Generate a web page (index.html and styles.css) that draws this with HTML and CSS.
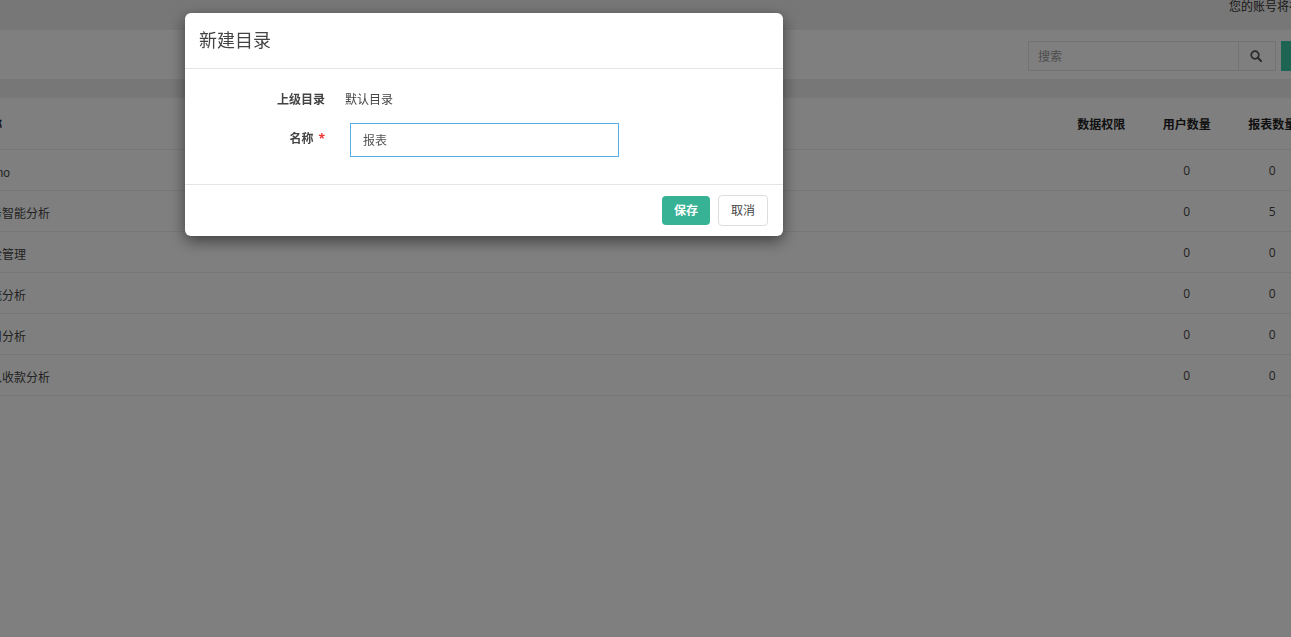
FILE: index.html
```html
<!DOCTYPE html>
<html lang="zh">
<head>
<meta charset="utf-8">
<title>新建目录</title>
<link rel="stylesheet" href="styles.css">
</head>
<body>
<div class="page">
  <div class="notice"><span class="notice-text">您的账号将在30天后到期</span></div>
  <div class="toolbar">
    <div class="search">
      <input class="search-input" type="text" placeholder="搜索">
      <button class="search-btn" type="button" aria-label="搜索">
        <svg width="12" height="12" viewBox="0 0 12 12"><circle cx="5" cy="5" r="3.8" fill="none" stroke="#555" stroke-width="1.7"/><path d="M7.8 7.8 11 11" stroke="#555" stroke-width="2" stroke-linecap="round"/></svg>
      </button>
    </div>
    <div class="add-btn"></div>
  </div>
  <div class="panel">
    <div class="row head"><div class="name">名称</div><div class="num">数据权限</div><div class="num">用户数量</div><div class="num">报表数量</div></div>
    <div class="row"><div class="name">Demo</div><div class="num"></div><div class="num">0</div><div class="num">0</div></div>
    <div class="row"><div class="name">财务智能分析</div><div class="num"></div><div class="num">0</div><div class="num">5</div></div>
    <div class="row"><div class="name">资金管理</div><div class="num"></div><div class="num">0</div><div class="num">0</div></div>
    <div class="row"><div class="name">物流分析</div><div class="num"></div><div class="num">0</div><div class="num">0</div></div>
    <div class="row"><div class="name">费用分析</div><div class="num"></div><div class="num">0</div><div class="num">0</div></div>
    <div class="row"><div class="name">收入收款分析</div><div class="num"></div><div class="num">0</div><div class="num">0</div></div>
  </div>
</div>
<div class="backdrop"></div>
<div class="modal">
  <div class="modal-header">新建目录</div>
  <div class="modal-body">
    <div class="field static"><div class="label">上级目录</div><div class="value">默认目录</div></div>
    <div class="field"><div class="label">名称<span class="req">*</span></div><input class="name-input" type="text" value="报表"></div>
  </div>
  <div class="modal-footer">
    <button class="btn btn-save" type="button">保存</button>
    <button class="btn btn-cancel" type="button">取消</button>
  </div>
</div>
</body>
</html>
```
FILE: styles.css
```css
* { box-sizing: border-box; }
html, body { margin: 0; height: 100%; overflow: hidden; }
body { background: #fff; font: 12px/1.4 "Open Sans", "Noto Sans CJK SC", sans-serif; color: #444; }
.page { margin-left: -40px; width: 1380px; background: #eeeeee; }
.notice { height: 30px; padding-left: 1269px; white-space: nowrap; line-height: 13px; color: #333; }
.toolbar { height: 49px; background: #fff; display: flex; align-items: flex-start; padding: 11px 0 0 1068px; }
.search { display: flex; width: 248px; height: 30px; }
.search-input { width: 210px; height: 30px; border: 1px solid #e5e6e7; border-right: 0; background: #fff; padding: 0 9px; font: inherit; outline: 0; }
.search-input::placeholder { color: #999; }
.search-btn { width: 38px; height: 30px; border: 1px solid #e5e6e7; background: #fff; padding: 0 2px 0 0; display: flex; align-items: center; justify-content: center; }
.add-btn { width: 60px; height: 30px; margin-left: 5px; background: #3cc8a6; }
.panel { margin-top: 19px; background: #fff; opacity: .999; }
.row { display: flex; height: 41px; align-items: center; border-bottom: 1px solid #eee; padding: 3px 0 0 18px; }
.row.head { height: 52px; padding-top: 4px; font-weight: 700; color: #222; }
.name { flex: 1; white-space: nowrap; padding-top: 4px; font-family: "Liberation Sans", "Noto Sans CJK SC", sans-serif; }
.row.head .name { padding-top: 0; }
.num { width: 85.5px; text-align: center; white-space: nowrap; }
.row > .num:last-child { margin-right: 25px; }
.backdrop { position: fixed; inset: 0; background: rgba(0,0,0,.5); }
.modal { position: fixed; left: 185px; top: 13px; width: 598px; height: 223px; background: #fff; border-radius: 6px; box-shadow: 0 5px 15px rgba(0,0,0,.5); display: flex; flex-direction: column; }
.modal-header { height: 56px; padding-left: 14px; font-size: 18px; line-height: 55px; color: #444; border-bottom: 1px solid #e5e5e5; }
.modal-body { flex: 1; padding-top: 20px; }
.field { display: flex; align-items: center; height: 34px; }
.field.static { height: 22px; margin-bottom: 12px; }
.label { width: 140px; text-align: right; font-weight: 700; color: #444; }
.field:not(.static) .label { position: relative; top: -1px; }
.req { color: #e33; margin-left: 5px; }
.value { margin-left: 20px; }
.name-input { margin-left: 25px; width: 269px; height: 34px; border: 1px solid #5aade8; padding: 0 12px 1px; font: inherit; color: #555; outline: 0; }
.modal-footer { height: 52px; border-top: 1px solid #e5e5e5; display: flex; justify-content: flex-end; align-items: center; gap: 8px; padding-right: 15px; }
.btn { font: inherit; border-radius: 4px; padding: 0; }
.btn-save { width: 48px; height: 29px; background: #38b295; border: 0; color: #fff; font-weight: 700; padding-top: 2px; }
.btn-cancel { width: 50px; height: 31px; background: #fff; border: 1px solid #ddd; color: #444; padding-top: 2px; }
```
